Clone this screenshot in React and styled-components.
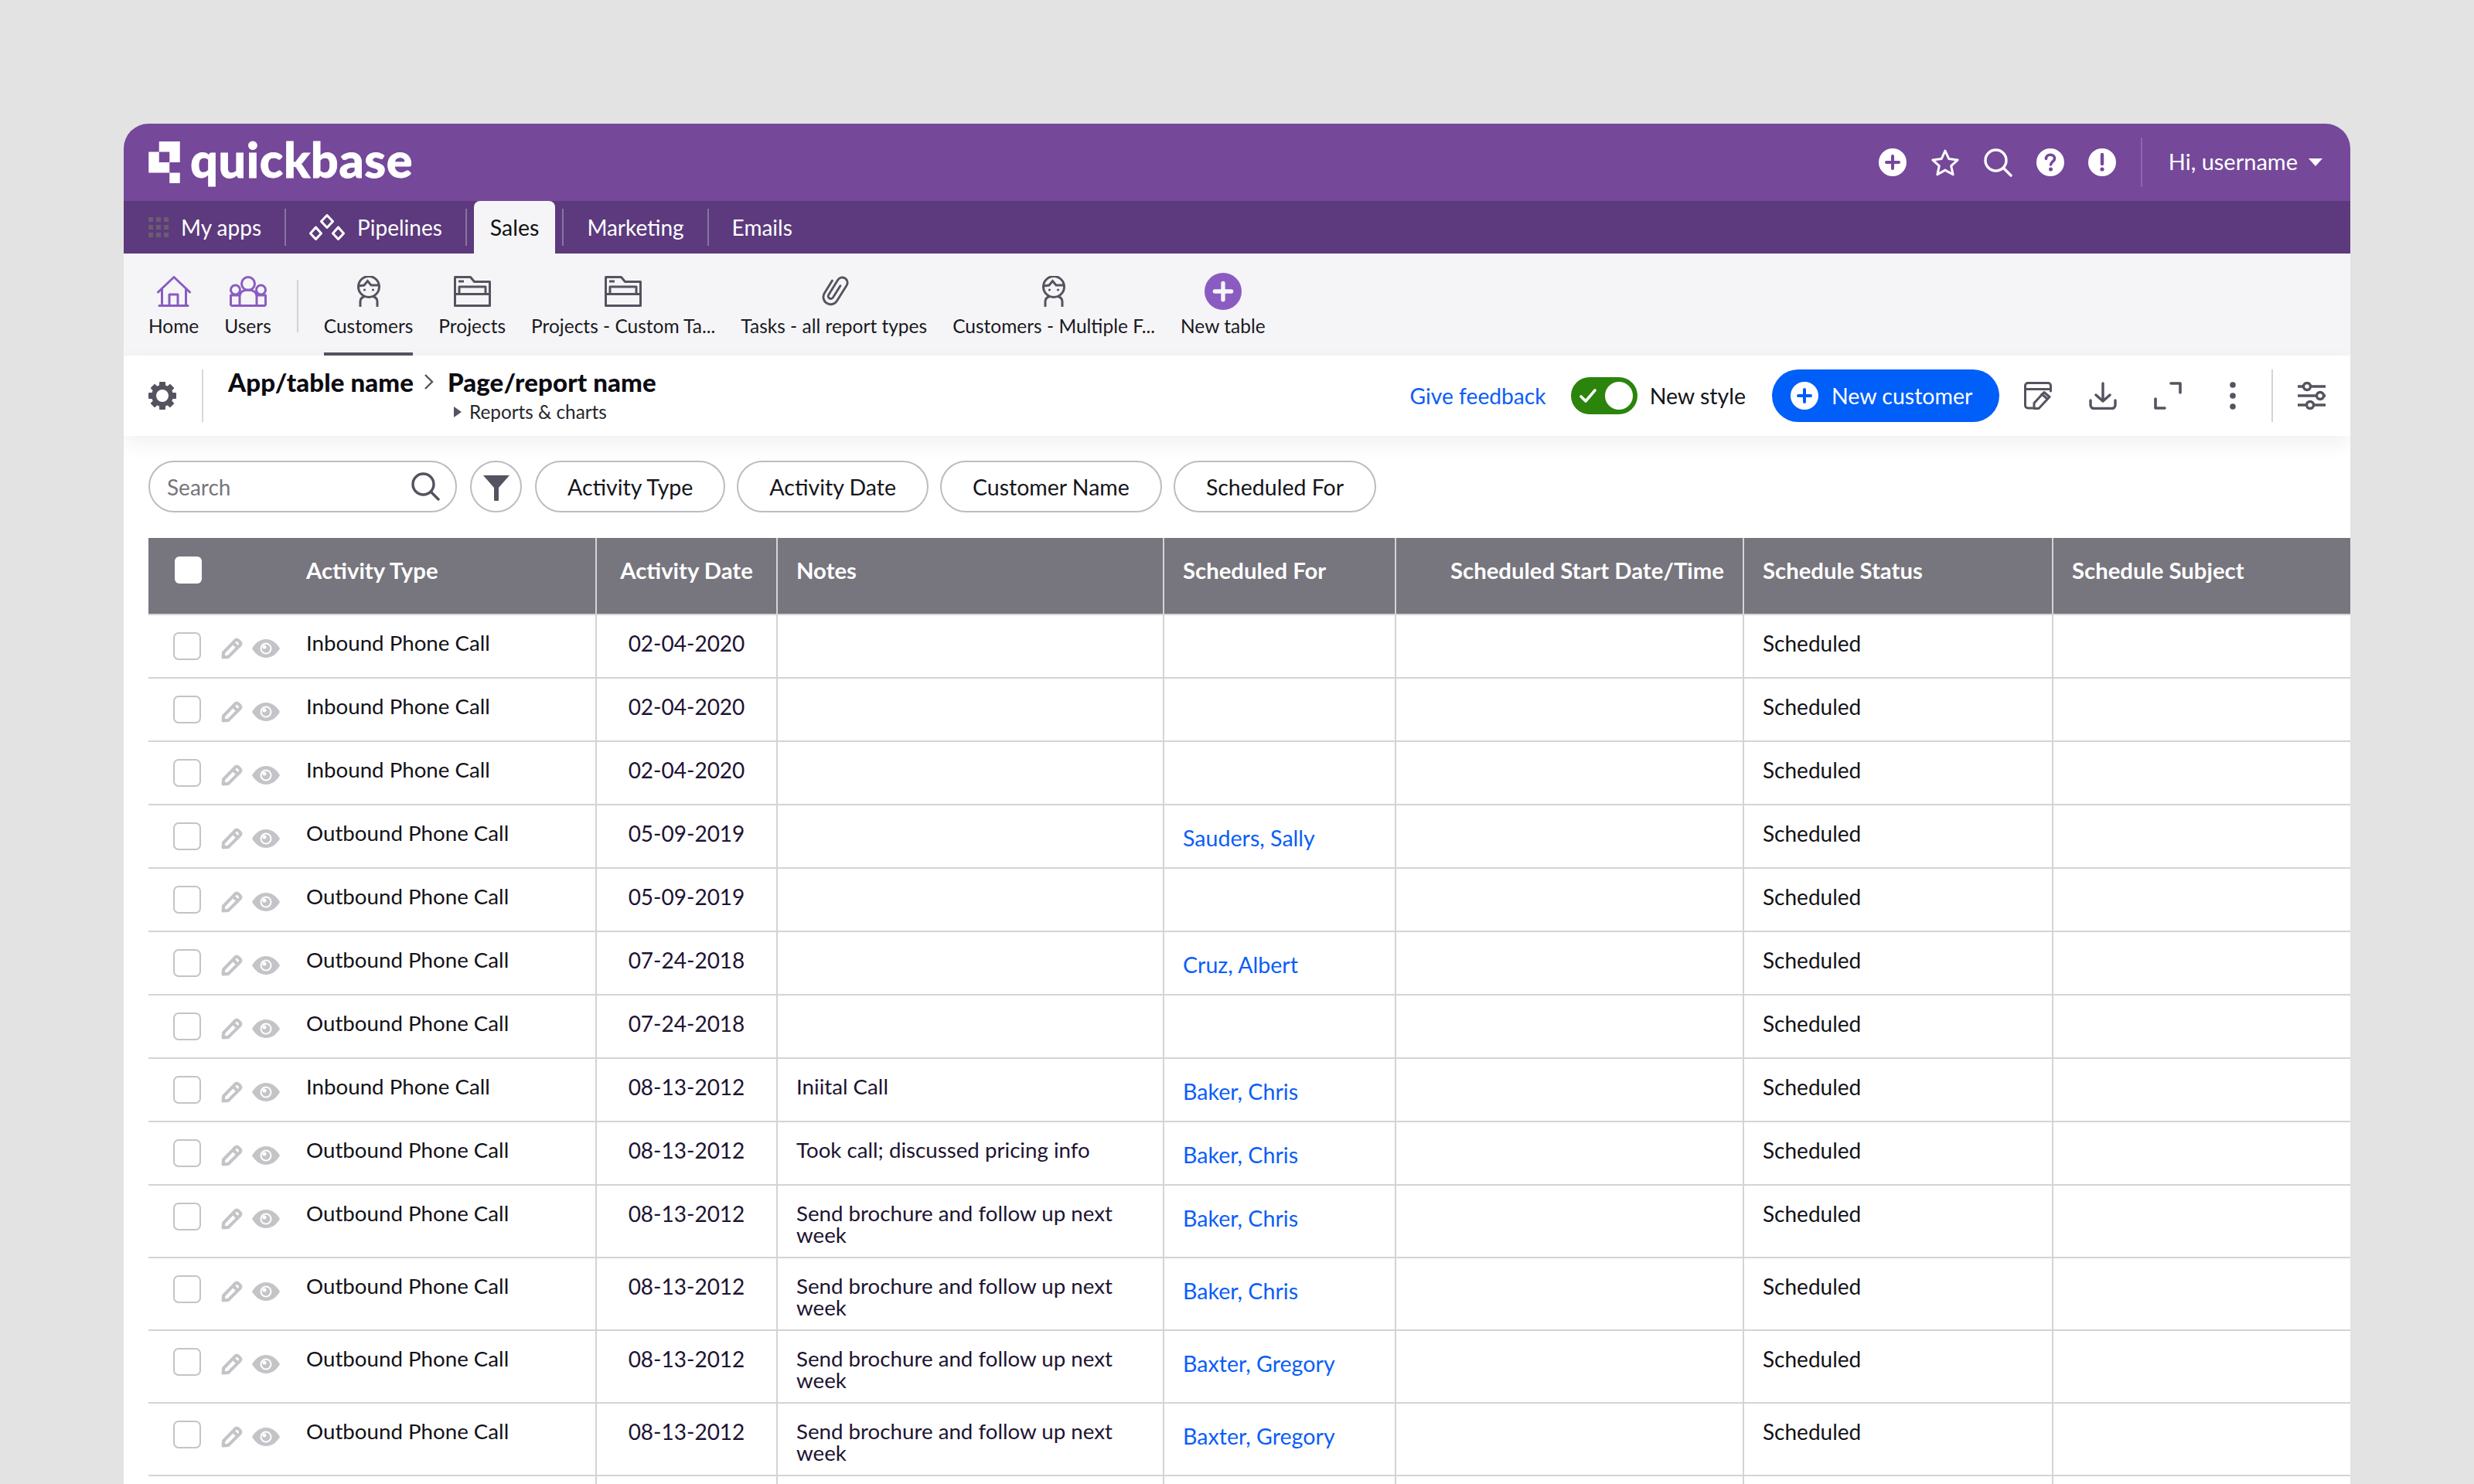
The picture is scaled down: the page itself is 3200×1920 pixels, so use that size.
import styled, { createGlobalStyle } from "styled-components";

const rows = [
  { type: "Inbound Phone Call", date: "02-04-2020" },
  { type: "Inbound Phone Call", date: "02-04-2020" },
  { type: "Inbound Phone Call", date: "02-04-2020" },
  { type: "Outbound Phone Call", date: "05-09-2019", who: "Sauders, Sally" },
  { type: "Outbound Phone Call", date: "05-09-2019" },
  { type: "Outbound Phone Call", date: "07-24-2018", who: "Cruz, Albert" },
  { type: "Outbound Phone Call", date: "07-24-2018" },
  { type: "Inbound Phone Call", date: "08-13-2012", notes: "Iniital Call", who: "Baker, Chris" },
  { type: "Outbound Phone Call", date: "08-13-2012", notes: "Took call; discussed pricing info", who: "Baker, Chris" },
  { type: "Outbound Phone Call", date: "08-13-2012", notes: "Send brochure and follow up next week", who: "Baker, Chris" },
  { type: "Outbound Phone Call", date: "08-13-2012", notes: "Send brochure and follow up next week", who: "Baker, Chris" },
  { type: "Outbound Phone Call", date: "08-13-2012", notes: "Send brochure and follow up next week", who: "Baxter, Gregory" },
  { type: "Outbound Phone Call", date: "08-13-2012", notes: "Send brochure and follow up next week", who: "Baxter, Gregory" },
];

const GRAY = "#55535f";
const PURPLE = "#8a5cc2";

const Plus = ({ size = 36, fill = "#fff", cross = "#75489a" }) => (
  <svg width={size} height={size} viewBox="0 0 36 36">
    <circle cx="18" cy="18" r="18" fill={fill} />
    <path d="M18 10v16M10 18h16" stroke={cross} strokeWidth="4" strokeLinecap="round" />
  </svg>
);

const Star = () => (
  <svg width="38" height="36" viewBox="0 0 38 36">
    <path d="M19 3l4.8 10.6 11.4 1.3-8.5 7.700 2.400 11.200L19 28.100 8.900 33.800l2.400-11.200-8.500-7.700 11.400-1.300z" fill="none" stroke="#fff" strokeWidth="3" strokeLinejoin="round" />
  </svg>
);

const Search = ({ color = "#fff" }) => (
  <svg width="37" height="37" viewBox="0 0 37 37" fill="none" stroke={color} strokeWidth="3.4" strokeLinecap="round">
    <circle cx="15.5" cy="15.5" r="13.5" />
    <path d="M25.5 25.5L35 35" />
  </svg>
);

const Help = () => (
  <svg width="36" height="36" viewBox="0 0 36 36">
    <circle cx="18" cy="18" r="18" fill="#fff" />
    <path d="M12.5 13.5c0-3.200 2.400-5.200 5.600-5.200s5.500 1.900 5.500 4.700c0 4-5 4.300-5 8" fill="none" stroke="#75489a" strokeWidth="3.6" strokeLinecap="round" />
    <circle cx="18.5" cy="27" r="2.500" fill="#75489a" />
  </svg>
);

const Alert = () => (
  <svg width="36" height="36" viewBox="0 0 36 36">
    <circle cx="18" cy="18" r="18" fill="#fff" />
    <path d="M18 8v12" stroke="#75489a" strokeWidth="4.400" strokeLinecap="round" />
    <circle cx="18" cy="27" r="2.600" fill="#75489a" />
  </svg>
);

const Logo = () => (
  <svg width="41" height="54" viewBox="0 0 3 4" fill="#fff">
    <path d="M1 0h2v2H2V1H1zM0 1h1v1h1v1H0zM2 3h1v1H2z" />
  </svg>
);

const AppsGrid = () => (
  <svg width="26" height="26" viewBox="0 0 26 26" fill="#6c5c70">
    {[0, 10, 20].flatMap((y) => [0, 10, 20].map((x) => <rect key={`${x}-${y}`} x={x} y={y} width="6" height="6" />))}
  </svg>
);

const PipelinesIcon = () => (
  <svg width="46" height="34" viewBox="0 0 46 34" fill="none" stroke="#fff" strokeWidth="3" strokeLinejoin="round">
    <path d="M23 1.500l7.500 8-7.500 8-7.500-8zM8.500 17l7 8-7 7.500-7-7.500zM37.500 17l7 8-7 7.500-7-7.500z" />
  </svg>
);

const HomeIcon = () => (
  <svg width="44" height="40" viewBox="0 0 44 40" fill="none" stroke={PURPLE} strokeWidth="3" strokeLinecap="round" strokeLinejoin="round">
    <path d="M1.500 21L22 1.500 42.500 21" />
    <path d="M6.500 17v21M37.500 17v21M3 38.500h37" />
    <path d="M16 38V24h11v14" />
  </svg>
);

const UsersIcon = () => (
  <svg width="48" height="40" viewBox="0 0 48 40" fill="none" stroke={PURPLE} strokeWidth="3" strokeLinejoin="round">
    <circle cx="24" cy="10" r="8.500" />
    <circle cx="7.500" cy="18" r="6" />
    <circle cx="40.500" cy="18" r="6" />
    <path d="M1.500 38.500V25h11M46.500 38.500V25h-11M13 38.500V26c0-5 5-8 11-8s11 3 11 8v12.500M1.500 38.500h45" />
  </svg>
);

const FaceIcon = () => (
  <svg width="32" height="40" viewBox="0 0 32 40" fill="none" stroke={GRAY} strokeWidth="3" strokeLinecap="round">
    <circle cx="16" cy="14" r="13.500" />
    <path d="M3 13l7-1 4.500-5.500L19 12h10" />
    <path d="M5 39v-6c0-3 2.500-5.500 5.500-6.500M27 39v-6c0-3-2.500-5.500-5.500-6.500" />
    <circle cx="10.500" cy="18" r="1.600" fill={GRAY} stroke="none" />
    <circle cx="21.500" cy="18" r="1.600" fill={GRAY} stroke="none" />
  </svg>
);

const FolderIcon = () => (
  <svg width="48" height="40" viewBox="0 0 48 40" fill="none" stroke={GRAY} strokeWidth="3" strokeLinejoin="round">
    <path d="M1.500 38.500V1.500h20l5 6h20v31z" />
    <path d="M1.500 23.500h45M7 23V14h34v9M6 7h7" />
  </svg>
);

const ClipIcon = () => (
  <svg width="38" height="42" viewBox="-1 -1 40 44" fill="none" stroke={GRAY} strokeWidth="3" strokeLinecap="round">
    <g transform="rotate(32 19 21)">
      <path d="M9 11v20a10 10 0 0 0 20 0V6a7 7 0 0 0-14 0v24a3.500 3.500 0 0 0 7 0V11" transform="translate(0 -1)" />
    </g>
  </svg>
);

const Gear = () => (
  <svg width="36" height="38" viewBox="0 0 36 38">
    {[0, 45, 90, 135, 180, 225, 270, 315].map((a) => (
      <rect key={a} x="14" y="1" width="8" height="8" rx="1" fill={GRAY} transform={`rotate(${a} 18 19)`} />
    ))}
    <circle cx="18" cy="19" r="11" fill="none" stroke={GRAY} strokeWidth="6" />
  </svg>
);

const Check = () => (
  <svg width="24" height="20" viewBox="0 0 24 20" fill="none" stroke="#fff" strokeWidth="3.600" strokeLinecap="round" strokeLinejoin="round">
    <path d="M3 11l6 6L21 3" />
  </svg>
);

const Funnel = () => (
  <svg width="36" height="34" viewBox="0 0 36 34" fill={GRAY}>
    <path d="M1 1h34L21 17v15a3 3 0 0 1-6 0V17z" />
  </svg>
);

const EditIcon = () => (
  <svg width="36" height="36" viewBox="0 0 36 36" fill="none" stroke={GRAY} strokeWidth="3" strokeLinecap="round" strokeLinejoin="round">
    <path d="M11 34H5a3.500 3.500 0 0 1-3.500-3.500V5A3.500 3.500 0 0 1 5 1.500h26A3.500 3.500 0 0 1 34.500 5v7M2 9.500h32" />
    <path d="M13 34.500v-7l13-14 7 6-14 15z" fill="#fff" />
    <path d="M23 16l7 6" />
  </svg>
);

const DownloadIcon = () => (
  <svg width="36" height="36" viewBox="0 0 36 36" fill="none" stroke={GRAY} strokeWidth="3.400" strokeLinecap="round" strokeLinejoin="round">
    <path d="M18 2v23M9 17l9 8 9-8" />
    <path d="M2 24v6a4.500 4.500 0 0 0 4.500 4.500h23A4.500 4.500 0 0 0 34 30v-6" />
  </svg>
);

const ExpandIcon = () => (
  <svg width="36" height="36" viewBox="0 0 36 36" fill="none" stroke={GRAY} strokeWidth="3.600" strokeLinecap="round" strokeLinejoin="round">
    <path d="M22 2h12v12M2 22v12h12" />
  </svg>
);

const DotsIcon = () => (
  <svg width="8" height="36" viewBox="0 0 8 36" fill={GRAY}>
    <circle cx="4" cy="4" r="3.800" />
    <circle cx="4" cy="18" r="3.800" />
    <circle cx="4" cy="32" r="3.800" />
  </svg>
);

const SlidersIcon = () => (
  <svg width="36" height="36" viewBox="0 0 36 36" fill="none" stroke={GRAY} strokeWidth="3.400">
    <path d="M0 6h36M0 18h36M0 30h36" />
    <circle cx="12" cy="6" r="4.500" fill="#fff" />
    <circle cx="29" cy="18" r="4.500" fill="#fff" />
    <circle cx="16" cy="30" r="4.500" fill="#fff" />
  </svg>
);

const Pencil = () => (
  <svg width="28" height="28" viewBox="0 0 27 27" fill="#fff" stroke="#c4c4c8" strokeWidth="4" strokeLinejoin="round">
    <path d="M2.500 24.500l.5-6L17.500 3.500a3 3 0 0 1 4 0l2 2a3 3 0 0 1 0 4L9 24z" />
    <path d="M15 6.500l5.500 5.500" />
  </svg>
);

const Eye = () => (
  <svg width="36" height="24" viewBox="0 0 36 24">
    <path d="M0 12C4 5 10 0 18 0s14 5 18 12c-4 7-10 12-18 12S4 19 0 12z" fill="#c4c4c8" />
    <circle cx="18" cy="12" r="7.500" fill="#fff" />
    <circle cx="18" cy="12" r="5.500" fill="#c4c4c8" />
    <circle cx="16" cy="10" r="2.500" fill="#fff" />
  </svg>
);

const navTables = [
  { label: "Customers", icon: <FaceIcon />, active: true },
  { label: "Projects", icon: <FolderIcon /> },
  { label: "Projects - Custom Ta...", icon: <FolderIcon /> },
  { label: "Tasks - all report types", icon: <ClipIcon /> },
  { label: "Customers - Multiple F...", icon: <FaceIcon /> },
  { label: "New table", icon: <Plus size={48} fill={PURPLE} cross="#f5f5f7" /> },
];

export default function App() {
  return (
    <>
      <GlobalStyle />
      <Card>
        <Header>
          <Brand>
            <Logo />
            <BrandName>quickbase</BrandName>
          </Brand>
          <HeaderRight>
            <HeaderIcons>
              <Plus />
              <Star />
              <Search />
              <Help />
              <Alert />
            </HeaderIcons>
            <HeaderDivider />
            <Username>Hi, username</Username>
            <Caret />
          </HeaderRight>
        </Header>

        <TabBar>
          <TabLink>
            <AppsGrid />
            My apps
          </TabLink>
          <TabSep />
          <TabLink>
            <PipelinesIcon />
            Pipelines
          </TabLink>
          <TabSep />
          <ActiveTab>Sales</ActiveTab>
          <TabSep />
          <TabLink>Marketing</TabLink>
          <TabSep />
          <TabLink>Emails</TabLink>
        </TabBar>

        <TableNav>
          <NavItem>
            <NavIcon><HomeIcon /></NavIcon>
            Home
          </NavItem>
          <NavItem>
            <NavIcon><UsersIcon /></NavIcon>
            Users
          </NavItem>
          <NavDivider />
          {navTables.map((t) => (
            <NavItem key={t.label} $active={t.active}>
              <NavIcon>{t.icon}</NavIcon>
              {t.label}
            </NavItem>
          ))}
        </TableNav>

        <Toolbar>
          <Gear />
          <ToolbarDivider />
          <Crumbs>
            <CrumbRow>
              <CrumbTitle>App/table name</CrumbTitle>
              <CrumbChevron>
                <svg width="14" height="22" viewBox="0 0 14 22" fill="none" stroke={GRAY} strokeWidth="2.400">
                  <path d="M2 2l9 9-9 9" />
                </svg>
              </CrumbChevron>
              <CrumbTitle>Page/report name</CrumbTitle>
            </CrumbRow>
            <CrumbSub>Reports &amp; charts</CrumbSub>
          </Crumbs>
          <ToolbarRight>
            <Feedback>Give feedback</Feedback>
            <Toggle>
              <Check />
              <Knob />
            </Toggle>
            <ToggleLabel>New style</ToggleLabel>
            <PrimaryButton>
              <Plus cross="#005ef9" />
              New customer
            </PrimaryButton>
            <ToolIcons>
              <EditIcon />
              <DownloadIcon />
              <ExpandIcon />
              <DotsSlot><DotsIcon /></DotsSlot>
            </ToolIcons>
            <ToolDivider />
            <SlidersIcon />
          </ToolbarRight>
        </Toolbar>

        <Filters>
          <SearchBox>
            <Placeholder>Search</Placeholder>
            <Search color={GRAY} />
          </SearchBox>
          <FunnelButton><Funnel /></FunnelButton>
          <Pill>Activity Type</Pill>
          <Pill>Activity Date</Pill>
          <Pill>Customer Name</Pill>
          <Pill>Scheduled For</Pill>
        </Filters>

        <Table>
          <colgroup>
            <col style={{ width: 580 }} />
            <col style={{ width: 234 }} />
            <col style={{ width: 500 }} />
            <col style={{ width: 300 }} />
            <col style={{ width: 450 }} />
            <col style={{ width: 400 }} />
            <col />
          </colgroup>
          <thead>
            <tr>
              <Th>
                <FirstHead>
                  <HeadCheck />
                  Activity Type
                </FirstHead>
              </Th>
              <Th $align="center">Activity Date</Th>
              <Th>Notes</Th>
              <Th>Scheduled For</Th>
              <Th $align="right">Scheduled Start Date/Time</Th>
              <Th>Schedule Status</Th>
              <Th>Schedule Subject</Th>
            </tr>
          </thead>
          <tbody>
            {rows.map((r, i) => (
              <tr key={i}>
                <FirstTd>
                  <RowHead>
                    <RowCheck />
                    <RowTools>
                      <Pencil />
                      <Eye />
                    </RowTools>
                    <span>{r.type}</span>
                  </RowHead>
                </FirstTd>
                <DateTd>{r.date}</DateTd>
                <NotesTd>{r.notes}</NotesTd>
                <Td>{r.who && <PersonLink>{r.who}</PersonLink>}</Td>
                <Td />
                <StatusTd>Scheduled</StatusTd>
                <Td />
              </tr>
            ))}
            <tr>
              <Td /><Td /><Td /><Td /><Td /><Td /><Td />
            </tr>
          </tbody>
        </Table>
      </Card>
    </>
  );
}

const GlobalStyle = createGlobalStyle`
  html, body {
    margin: 0;
    height: 100%;
    overflow: hidden;
    background: #e3e3e3;
    font-family: Lato, "Noto Sans", sans-serif;
  }
`;

const Card = styled.div`
  width: 2880px;
  height: 1760px;
  margin: 160px 0 0 160px;
  background: #fff;
  border-radius: 32px 32px 0 0;
  overflow: hidden;
`;

const Header = styled.header`
  height: 100px;
  background: #75489a;
  display: flex;
  align-items: center;
  justify-content: space-between;
  padding: 0 36px 0 32px;
  box-sizing: border-box;
`;

const Brand = styled.div`
  display: flex;
  align-items: center;
  gap: 13px;
`;

const BrandName = styled.span`
  color: #fff;
  font-size: 63px;
  font-weight: 900;
  line-height: 48px;
  letter-spacing: 0.6px;
  -webkit-text-stroke: 0.8px #fff;
  margin-bottom: 8px;
`;

const HeaderRight = styled.div`
  display: flex;
  align-items: center;
`;

const HeaderIcons = styled.div`
  display: flex;
  align-items: center;
  gap: 31px;
`;

const HeaderDivider = styled.div`
  width: 2px;
  height: 64px;
  background: #8d68ac;
  margin: 0 34px 0 32px;
`;

const Username = styled.span`
  color: #fff;
  font-size: 29px;
  margin-top: -3px;
`;

const Caret = styled.span`
  width: 0;
  height: 0;
  margin-left: 14px;
  border-left: 9px solid transparent;
  border-right: 9px solid transparent;
  border-top: 10px solid #fff;
`;

const TabBar = styled.nav`
  height: 68px;
  background: #5c3a7d;
  display: flex;
  align-items: center;
  padding-left: 32px;
`;

const TabLink = styled.a`
  display: flex;
  align-items: center;
  gap: 16px;
  color: #fff;
  font-size: 28px;
`;

const TabSep = styled.span`
  width: 2px;
  height: 48px;
  margin: 0 30px;
  background: #8a74a0;
`;

const ActiveTab = styled.a`
  align-self: stretch;
  display: flex;
  align-items: center;
  margin: 0 -21px;
  padding: 0 21px;
  background: #f5f5f7;
  border-radius: 8px 8px 0 0;
  color: #111;
  font-size: 28.5px;
`;

const TableNav = styled.nav`
  height: 132px;
  box-sizing: border-box;
  background: #f5f5f7;
  display: flex;
  padding: 24px 0 0 32px;
  gap: 33px;
`;

const NavItem = styled.a`
  display: flex;
  flex-direction: column;
  align-items: center;
  box-sizing: border-box;
  height: 108px;
  border-bottom: 4px solid ${(p) => (p.$active ? GRAY : "transparent")};
  color: #1a1a1f;
  font-size: 24.5px;
  line-height: 28px;
  white-space: nowrap;
`;

const NavIcon = styled.span`
  display: flex;
  align-items: center;
  justify-content: center;
  box-sizing: border-box;
  height: 48px;
  padding-top: 2px;
  margin-bottom: 8px;
`;

const NavDivider = styled.span`
  width: 2px;
  height: 68px;
  margin-top: 10px;
  background: #d2d2d6;
`;

const Toolbar = styled.div`
  position: relative;
  height: 104px;
  box-sizing: border-box;
  background: #fff;
  display: flex;
  align-items: center;
  padding: 0 32px;
  box-shadow: 0 10px 26px rgba(0, 0, 0, 0.06);
`;

const ToolbarDivider = styled.span`
  width: 2px;
  height: 68px;
  margin: 0 32px 0 33px;
  background: #d8d8da;
`;

const Crumbs = styled.div`
  display: flex;
  flex-direction: column;
  margin-top: -3px;
`;

const CrumbRow = styled.div`
  display: flex;
  align-items: center;
`;

const CrumbTitle = styled.span`
  font-size: 33px;
  font-weight: 900;
  line-height: 42px;
  letter-spacing: 0.1px;
  color: #0c0c12;
`;

const CrumbChevron = styled.span`
  display: flex;
  margin: 0 17px 0 13px;
`;

const CrumbSub = styled.span`
  position: relative;
  margin: 2px 0 0 312px;
  font-size: 24.3px;
  line-height: 32px;
  color: #26262c;
  &::before {
    content: "";
    position: absolute;
    left: -20px;
    top: 9px;
    border-left: 10px solid ${GRAY};
    border-top: 7px solid transparent;
    border-bottom: 7px solid transparent;
  }
`;

const ToolbarRight = styled.div`
  margin-left: auto;
  display: flex;
  align-items: center;
`;

const Feedback = styled.a`
  color: #0a5ef7;
  font-size: 28.2px;
  margin-right: 32px;
`;

const Toggle = styled.span`
  width: 86px;
  height: 48px;
  box-sizing: border-box;
  border-radius: 24px;
  background: #2b840b;
  display: flex;
  align-items: center;
  justify-content: space-between;
  padding: 0 6px 0 10px;
`;

const Knob = styled.span`
  width: 36px;
  height: 36px;
  border-radius: 50%;
  background: #fff;
`;

const ToggleLabel = styled.span`
  margin: 0 34px 0 16px;
  font-size: 28.5px;
  color: #15151a;
`;

const PrimaryButton = styled.button`
  height: 68px;
  width: 294px;
  border: 0;
  border-radius: 34px;
  background: #005ef9;
  color: #fff;
  font: 28.5px Lato, sans-serif;
  display: flex;
  align-items: center;
  gap: 17px;
  padding: 0 0 0 24px;
`;

const ToolIcons = styled.div`
  display: flex;
  align-items: center;
  gap: 48px;
  margin-left: 32px;
`;

const DotsSlot = styled.span`
  display: flex;
  width: 36px;
  justify-content: center;
`;

const ToolDivider = styled.span`
  width: 2px;
  height: 68px;
  margin: 0 32px;
  background: #d4d4d6;
`;

const Filters = styled.div`
  display: flex;
  gap: 17px;
  padding: 32px 32px 33px;
`;

const SearchBox = styled.div`
  width: 399px;
  height: 67px;
  box-sizing: border-box;
  border: 2px solid #bdbdc0;
  border-radius: 34px;
  display: flex;
  align-items: center;
  justify-content: space-between;
  padding: 0 20px 0 22px;
`;

const Placeholder = styled.span`
  font-size: 28px;
  color: #77757d;
`;

const FunnelButton = styled.span`
  width: 67px;
  height: 67px;
  box-sizing: border-box;
  border: 2px solid #bdbdc0;
  border-radius: 50%;
  display: flex;
  align-items: center;
  justify-content: center;
  padding-top: 3px;
`;

const Pill = styled.span`
  height: 67px;
  box-sizing: border-box;
  border: 2px solid #bdbdc0;
  border-radius: 34px;
  display: flex;
  align-items: center;
  padding: 0 40px;
  font-size: 28.5px;
  color: #15151a;
  & + & {
    margin-left: -2px;
  }
`;

const Table = styled.table`
  margin-left: 32px;
  width: 2848px;
  table-layout: fixed;
  border-collapse: separate;
  border-spacing: 0;
`;

const Th = styled.th`
  height: 100px;
  box-sizing: border-box;
  padding: 0 24px 15px 24px;
  background: #77757d;
  color: #fff;
  font-size: 29.3px;
  font-weight: 700;
  text-align: ${(p) => p.$align || "left"};
  white-space: nowrap;
  border-bottom: 2px solid #d4d4d6;
  border-right: 2px solid #d4d4d6;
  &:last-child {
    border-right: 0;
  }
`;

const FirstHead = styled.div`
  display: flex;
  align-items: center;
  margin-left: -24px;
  padding-left: 34px;
`;

const HeadCheck = styled.span`
  width: 35px;
  height: 35px;
  margin: 0 135px 0 0;
  border-radius: 6px;
  background: #fff;
`;

const Td = styled.td`
  height: 82px;
  box-sizing: border-box;
  vertical-align: top;
  padding: 22px 25px 14px 24px;
  font-size: 27.7px;
  line-height: 28px;
  color: #121217;
  border-bottom: 2px solid #d4d4d6;
  border-right: 2px solid #d4d4d6;
  &:last-child {
    border-right: 0;
  }
`;

const FirstTd = styled(Td)`
  padding-left: 0;
`;

const DateTd = styled(Td)`
  text-align: center;
  font-size: 28px;
  color: #1d1433;
  padding-left: 0;
  padding-right: 0;
`;

const NotesTd = styled(Td)`
  color: #1d1433;
`;

const StatusTd = styled(Td)`
  font-size: 28px;
`;

const RowHead = styled.div`
  display: flex;
  align-items: flex-start;
`;

const RowCheck = styled.span`
  flex: none;
  width: 36px;
  height: 36px;
  box-sizing: border-box;
  margin: 0 26px 0 32px;
  border: 2px solid #c4c4c8;
  border-radius: 7px;
`;

const RowTools = styled.span`
  display: flex;
  align-items: center;
  gap: 12px;
  margin: 7px 34px 0 0;
`;

const PersonLink = styled.a`
  display: block;
  margin-top: 6px;
  font-size: 28.6px;
  color: #0a5ef7;
`;
